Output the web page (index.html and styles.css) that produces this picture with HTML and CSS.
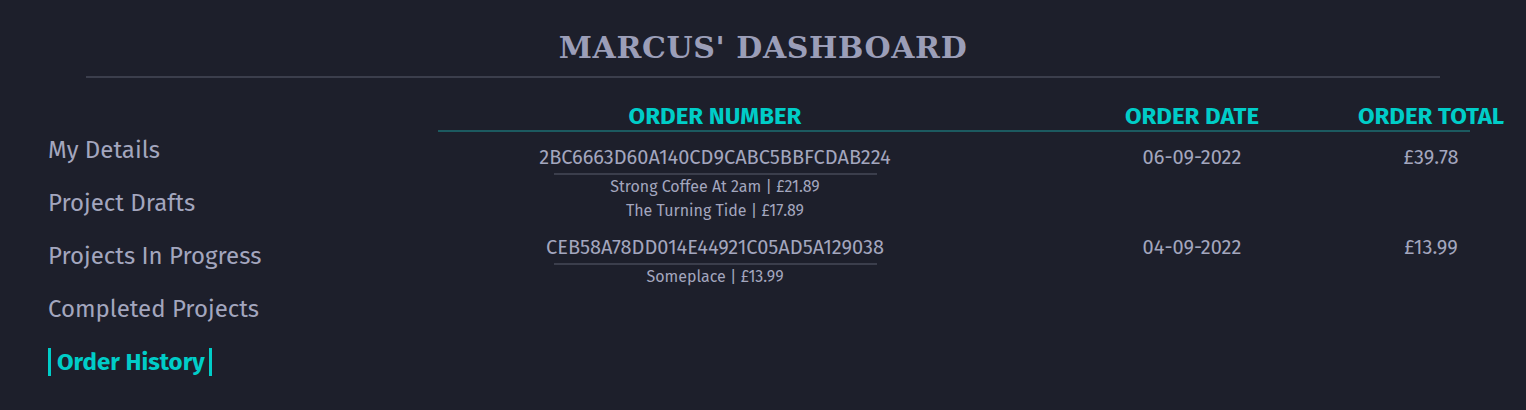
FILE: index.html
```html
<!DOCTYPE html>
<html lang="en">
<head>
<meta charset="utf-8">
<title>Marcus' Dashboard</title>
<link rel="stylesheet" href="styles.css">
</head>
<body>
<header class="page-header">
  <h1 class="title">MARCUS' DASHBOARD</h1>
</header>
<main class="layout">
  <nav class="sidebar">
    <a class="nav-item" href="#">My Details</a>
    <a class="nav-item" href="#">Project Drafts</a>
    <a class="nav-item" href="#">Projects In Progress</a>
    <a class="nav-item" href="#">Completed Projects</a>
    <a class="nav-item active" href="#">Order History</a>
  </nav>
  <section class="orders">
    <div class="orders-head">
      <div class="col-num">ORDER NUMBER</div>
      <div class="col-date">ORDER DATE</div>
      <div class="col-total">ORDER TOTAL</div>
    </div>
    <div class="order-row">
      <div class="col-num">
        <div class="order-id">2BC6663D60A140CD9CABC5BBFCDAB224</div>
        <div class="order-item">Strong Coffee At 2am | £21.89</div>
        <div class="order-item">The Turning Tide | £17.89</div>
      </div>
      <div class="col-date cell">06-09-2022</div>
      <div class="col-total cell">£39.78</div>
    </div>
    <div class="order-row">
      <div class="col-num">
        <div class="order-id">CEB58A78DD014E44921C05AD5A129038</div>
        <div class="order-item">Someplace | £13.99</div>
      </div>
      <div class="col-date cell">04-09-2022</div>
      <div class="col-total cell">£13.99</div>
    </div>
  </section>
</main>
</body>
</html>
```

FILE: styles.css
```css
html, body {
  margin: 0;
  padding: 0;
  background: #1d1f2b;
}
body {
  font-family: "Fira Sans", Lato, "Noto Sans", sans-serif;
  color: #a3a6be;
  width: 1526px;
  height: 410px;
  overflow: hidden;
}
.page-header {
  padding-top: 28px;
  margin: 0 86px;
  border-bottom: 2px solid #3b3e4c;
  padding-bottom: 8px;
}
.title {
  margin: 0;
  text-align: center;
  font-family: "DejaVu Serif", "Liberation Serif", serif;
  font-weight: bold;
  font-size: 30px;
  line-height: 40px;
  color: #9b9eb8;
  letter-spacing: 0.6px;
}
.layout {
  display: flex;
}
.sidebar {
  width: 438px;
  box-sizing: border-box;
  padding-left: 48px;
  padding-top: 57px;
  display: flex;
  flex-direction: column;
  align-items: flex-start;
  gap: 23px;
}
.nav-item {
  font-size: 24px;
  line-height: 30px;
  color: #a3a6be;
  text-decoration: none;
}
.nav-item.active {
  color: #00cdc8;
  font-weight: bold;
  border-left: 3px solid #00cdc8;
  border-right: 3px solid #00cdc8;
  padding: 0 4px 0 6px;
  line-height: 28px;
  margin-top: 1px;
}
.orders {
  width: 1032px;
  margin-top: 24px;
}
.orders-head, .order-row {
  display: grid;
  grid-template-columns: 554px 400px 78px;
}
.orders-head {
  border-bottom: 2px solid #1c5a60;
  color: #00cdc8;
  font-weight: bold;
  font-size: 24px;
  line-height: 28px;
  text-align: center;
}
.orders-head > div {
  display: flex;
  justify-content: center;
  white-space: nowrap;
}
.order-row {
  padding-top: 12px;
  text-align: center;
}
.order-row + .order-row {
  padding-top: 11px;
}
.order-id {
  font-size: 20px;
  line-height: 26px;
  width: 323px;
  margin: 0 auto;
  display: flex;
  justify-content: center;
  white-space: nowrap;
  border-bottom: 2px solid #3b3e4c;
  padding-bottom: 3px;
}
.order-item {
  font-size: 16px;
  line-height: 24px;
}
.cell {
  font-size: 20px;
  line-height: 26px;
}
```
